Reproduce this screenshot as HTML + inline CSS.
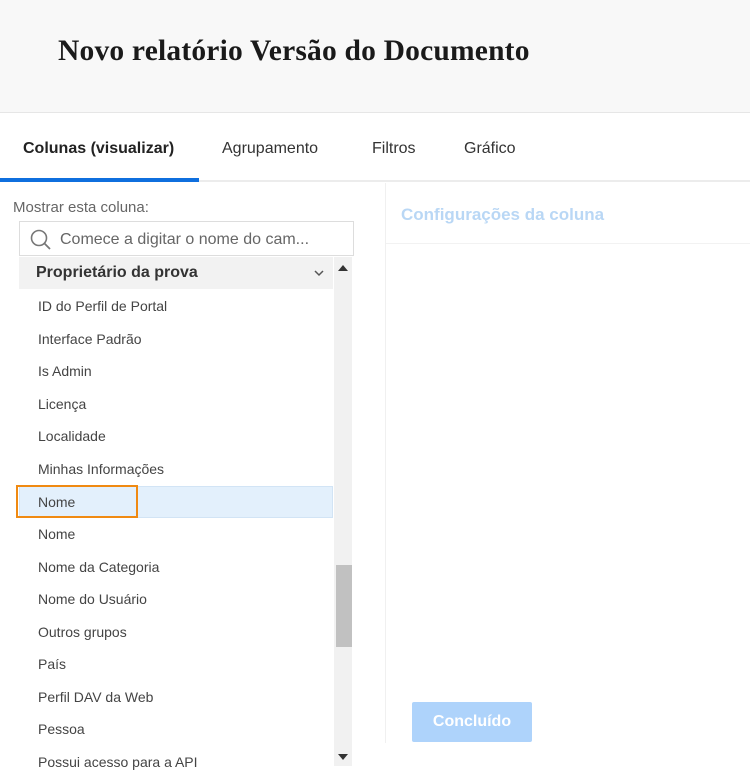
<!DOCTYPE html>
<html><head><meta charset="utf-8"><style>
*{margin:0;padding:0;box-sizing:border-box}
body{width:750px;height:766px;overflow:hidden;background:#fff;font-family:"Liberation Sans",sans-serif;position:relative;color:#333}
.hdr{position:absolute;left:0;top:0;width:750px;height:113px;background:#f8f8f8;border-bottom:1px solid #e6e6e6}
.hdr h1{position:absolute;left:58px;top:35px;font-family:"Liberation Serif",serif;font-size:29.5px;font-weight:bold;color:#1a1a1a;letter-spacing:0.2px}
.tabs{position:absolute;top:113px;left:0;width:750px;height:69px;border-bottom:2px solid #ececec}
.tab{position:absolute;top:27px;font-size:16px;color:#333}
.ul{position:absolute;left:0;top:178px;width:199px;height:4px;background:#0f6fde}
.lbl{position:absolute;left:13px;top:199px;font-size:15px;color:#666}
.search{position:absolute;left:19px;top:221px;width:335px;height:35px;border:1px solid #ddd;background:#fff}
.search span{position:absolute;left:40px;top:9px;font-size:16px;color:#666}
.grp{position:absolute;left:19px;top:257px;width:314px;height:32px;background:#f2f2f2}
.grp b{position:absolute;left:17px;top:7px;font-size:16px;color:#333}
.item{position:absolute;left:19px;width:314px;height:32px;font-size:14px;color:#444}
.item span{position:absolute;left:19px;top:8px}
.sb{position:absolute;left:334px;top:257px;width:18px;height:509px;background:#f1f1f1}
.thumb{position:absolute;left:336px;top:565px;width:16px;height:82px;background:#c1c1c1}
.vline{position:absolute;left:385px;top:183px;width:1px;height:560px;background:#f0f0f0}
.cfg{position:absolute;left:401px;top:205px;font-size:17px;font-weight:bold;color:#b9d7f5}
.hl{position:absolute;left:386px;top:243px;width:364px;height:1px;background:#f2f2f2}
.btn{position:absolute;left:412px;top:702px;width:120px;height:40px;background:#aed3fb;border-radius:2px;color:#fff;font-size:16px;font-weight:bold;text-align:center;line-height:40px}
</style></head><body>
<div class="hdr"><h1>Novo relatório Versão do Documento</h1></div>
<div class="tabs">
<div class="tab" style="left:23px;font-weight:bold;color:#222">Colunas (visualizar)</div>
<div class="tab" style="left:222px">Agrupamento</div>
<div class="tab" style="left:372px">Filtros</div>
<div class="tab" style="left:464px">Gráfico</div>
</div>
<div class="ul"></div>
<div class="lbl">Mostrar esta coluna:</div>
<div class="search"><svg style="position:absolute;left:9px;top:7px" width="24" height="22" viewBox="0 0 24 22"><circle cx="10" cy="9" r="7.5" fill="none" stroke="#777" stroke-width="1.6"/><line x1="15.5" y1="14.5" x2="21" y2="20" stroke="#777" stroke-width="1.8"/></svg><span>Comece a digitar o nome do cam...</span></div>
<div class="grp"><b>Proprietário da prova</b><svg style="position:absolute;left:295px;top:13px" width="10" height="7" viewBox="0 0 10 7"><path d="M1 1l4 4 4-4" fill="none" stroke="#555" stroke-width="1.5"/></svg></div>
<div class="item" style="top:290px"><span>ID do Perfil de Portal</span></div>
<div class="item" style="top:323px"><span>Interface Padrão</span></div>
<div class="item" style="top:355px"><span>Is Admin</span></div>
<div class="item" style="top:388px"><span>Licença</span></div>
<div class="item" style="top:420px"><span>Localidade</span></div>
<div class="item" style="top:453px"><span>Minhas Informações</span></div>
<div class="item" style="top:486px;background:#e3f0fc;border:1px solid #d2e4f5"><span style="top:7px;left:18px">Nome</span></div>
<div style="position:absolute;left:16px;top:485px;width:122px;height:33px;border:2px solid #f08a12"></div>
<div class="item" style="top:518px"><span>Nome</span></div>
<div class="item" style="top:551px"><span>Nome da Categoria</span></div>
<div class="item" style="top:583px"><span>Nome do Usuário</span></div>
<div class="item" style="top:616px"><span>Outros grupos</span></div>
<div class="item" style="top:648px"><span>País</span></div>
<div class="item" style="top:681px"><span>Perfil DAV da Web</span></div>
<div class="item" style="top:713px"><span>Pessoa</span></div>
<div class="item" style="top:746px"><span>Possui acesso para a API</span></div>
<div class="sb"></div>
<svg style="position:absolute;left:338px;top:265px" width="10" height="6"><path d="M0 6L5 0L10 6z" fill="#333"/></svg>
<svg style="position:absolute;left:338px;top:754px" width="10" height="6"><path d="M0 0L5 6L10 0z" fill="#333"/></svg>
<div class="thumb"></div>
<div class="vline"></div>
<div class="cfg">Configurações da coluna</div>
<div class="hl"></div>
<div class="btn">Concluído</div>
</body></html>
